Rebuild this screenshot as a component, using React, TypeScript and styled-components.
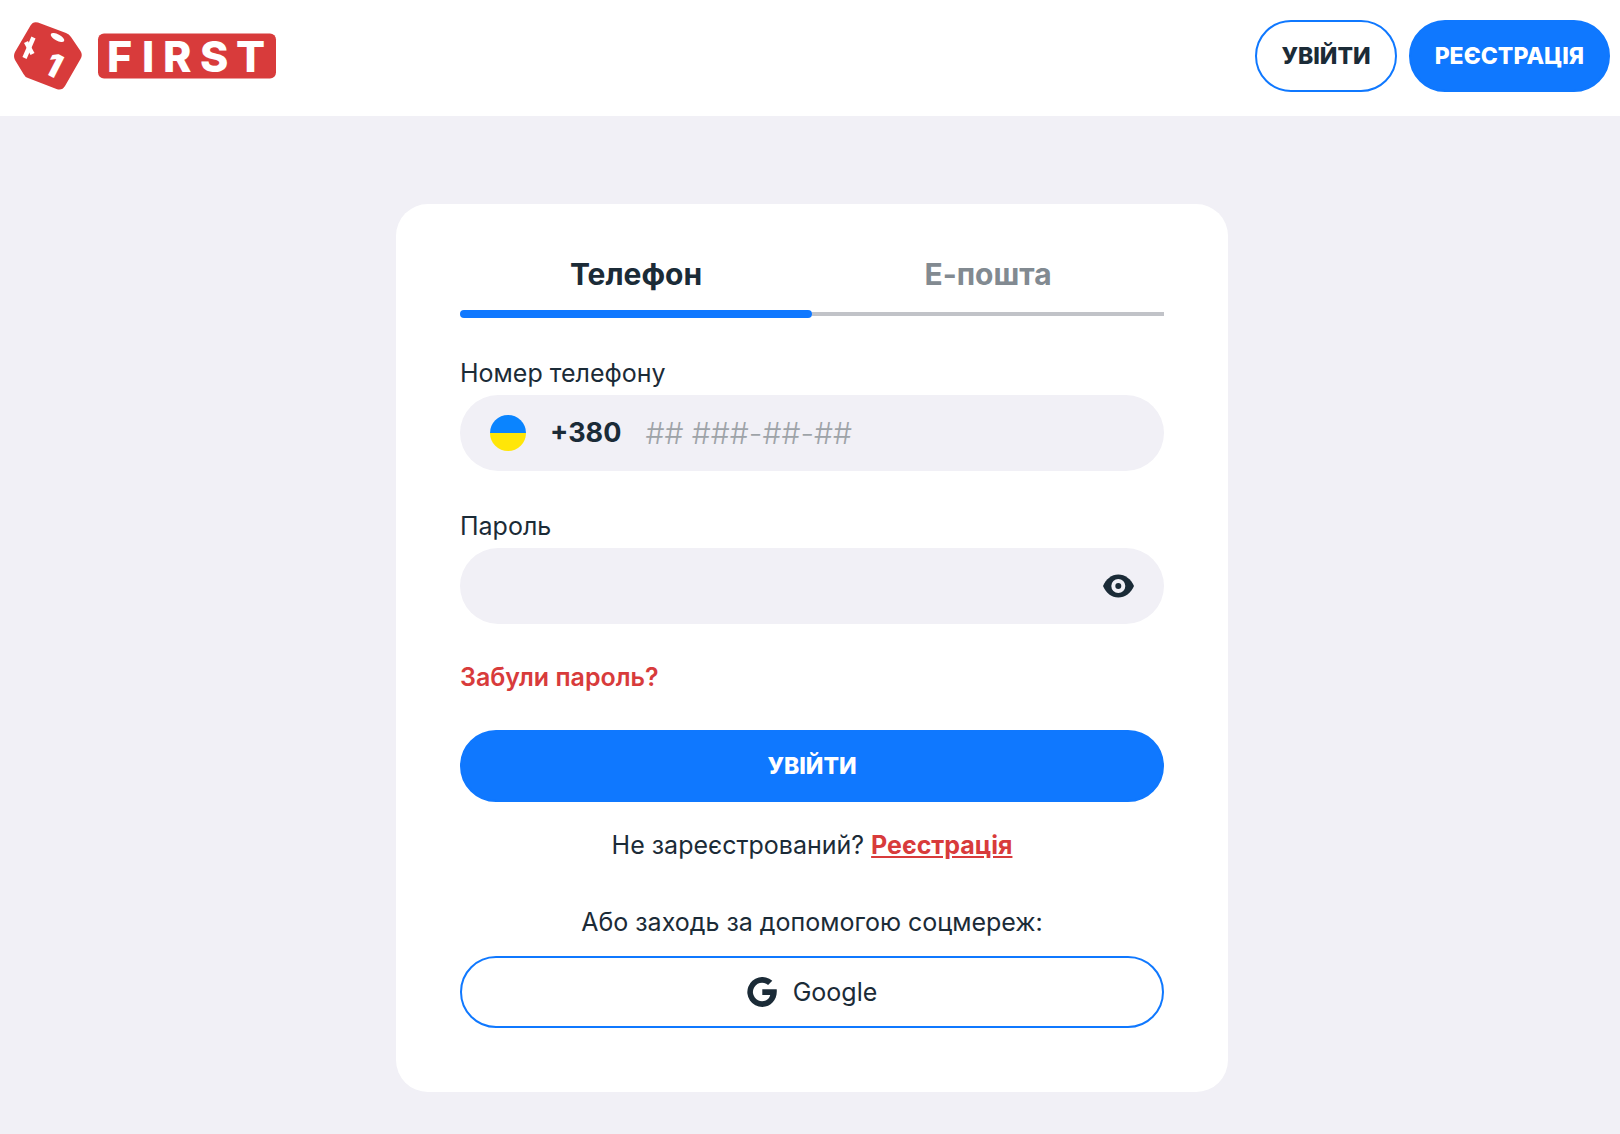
import React, { useState } from "react";
import styled, { createGlobalStyle, css } from "styled-components";

const color = {
  ink: "#1b2b37",
  blue: "#0f78ff",
  red: "#d83b3b",
  page: "#f1f0f6",
  muted: "#828a91",
  line: "#c1c3c8",
  placeholder: "#9ea3a8",
};

const GlobalStyle = createGlobalStyle`
  *, *::before, *::after { box-sizing: border-box; }
  body {
    margin: 0;
    background: ${color.page};
    color: ${color.ink};
    font-family: Inter, "Open Sans", sans-serif;
    font-size: 25px;
    line-height: 32px;
  }
  button, input { font: inherit; color: inherit; }
`;

const Header = styled.header`
  display: flex;
  align-items: center;
  justify-content: space-between;
  padding: 20px 10px 24px 14px;
  background: #fff;
`;

const LogoLink = styled.a`
  display: flex;
  align-items: center;
  gap: 16px;
`;

const Wordmark = styled.svg`
  overflow: visible;
`;

const HeaderActions = styled.nav`
  display: flex;
  gap: 12px;
`;

const Button = styled.button<{ $outlined?: boolean }>`
  display: flex;
  align-items: center;
  justify-content: center;
  gap: 16px;
  height: 72px;
  padding: 0 24px;
  border: 2px solid ${color.blue};
  border-radius: 36px;
  background: ${color.blue};
  color: #fff;
  font-size: 23px;
  font-weight: 800;
  cursor: pointer;
  ${(p) =>
    p.$outlined &&
    css`
      background: #fff;
      color: ${color.ink};
    `}
`;

const GoogleButton = styled(Button)`
  font-size: 25px;
  font-weight: 400;
`;

const Main = styled.main`
  display: flex;
  justify-content: center;
  padding: 88px 10px 42px 14px;
`;

const Card = styled.section`
  width: 100%;
  max-width: 832px;
  padding: 44px 64px 64px;
  border-radius: 32px;
  background: #fff;
`;

const Tabs = styled.div`
  display: grid;
  grid-template-columns: 1fr 1fr;
`;

const Tab = styled.button<{ $active: boolean }>`
  display: flex;
  flex-direction: column;
  padding: 0;
  border: 0;
  background: none;
  color: ${(p) => (p.$active ? color.ink : color.muted)};
  font-size: 30px;
  font-weight: 700;
  line-height: 52px;
  cursor: pointer;

  &::after {
    content: "";
    width: 100%;
    height: ${(p) => (p.$active ? 8 : 4)}px;
    margin: ${(p) => (p.$active ? 10 : 12)}px 0 0;
    border-radius: ${(p) => (p.$active ? 4 : 0)}px;
    background: ${(p) => (p.$active ? color.blue : color.line)};
  }
`;

const TabLabel = styled.span`
  width: 100%;
  text-align: center;
`;

const Form = styled.form`
  display: flex;
  flex-direction: column;
  gap: 37px;
  padding-top: 37px;
`;

const Field = styled.div`
  display: flex;
  flex-direction: column;
  gap: 4px;
`;

const Label = styled.label`
  line-height: 36px;
`;

const InputShell = styled.div`
  display: flex;
  align-items: center;
  gap: 24px;
  height: 76px;
  padding: 0 30px;
  border-radius: 38px;
  background: ${color.page};
`;

const Flag = styled.span`
  width: 36px;
  height: 36px;
  border-radius: 50%;
  background: linear-gradient(#0a84ff 50%, #ffe608 50%);
`;

const DialCode = styled.span`
  font-size: 27px;
  font-weight: 700;
`;

const TextInput = styled.input`
  flex: 1;
  min-width: 0;
  padding: 0;
  border: 0;
  outline: 0;
  background: none;
  font-size: 30px;
  font-weight: 300;

  &::placeholder {
    color: ${color.placeholder};
    opacity: 1;
  }
`;

const IconButton = styled.button`
  display: flex;
  padding: 0;
  border: 0;
  background: none;
  cursor: pointer;
`;

const ForgotLink = styled.a`
  align-self: flex-start;
  color: ${color.red};
  font-weight: 600;
  text-decoration: none;
`;

const Note = styled.p`
  margin: 27px 0 0;
  text-align: center;
`;

const SignUpLink = styled.a`
  color: ${color.red};
  font-weight: 700;
`;

const Social = styled.div`
  display: flex;
  flex-direction: column;
  gap: 18px;
  padding-top: 45px;
  text-align: center;
`;

function Logo() {
  return (
    <LogoLink href="#" aria-label="First">
      <svg width="68" height="68" viewBox="14 22 68 68" aria-hidden="true">
        <path
          d="M30.500 25.500Q33 21 38 22.500L66 33Q69 34 71 37L80.500 51Q83 55 80.500 59L65 86Q62 91 56.500 89L28 78Q25 77 23.500 74L15 60Q13 56 15 52Z"
          fill={color.red}
        />
        <ellipse cx="57.500" cy="37.500" rx="7.500" ry="3.200" transform="rotate(28 57.500 37.500)" fill="#fff" />
        <path d="M33.500 37.500L24.500 58" stroke="#fff" strokeWidth="4.500" />
        <path d="M26 42L32.500 54" stroke="#fff" strokeWidth="4.500" />
        <text x="-11" y="0" transform="translate(52 77) rotate(27)" fill="#fff" fontSize="32" fontWeight="900">
          1
        </text>
      </svg>
      <Wordmark width="178" height="46" viewBox="0 0 178 46" role="img" aria-label="FIRST">
        <rect y="0.500" width="178" height="45" rx="6" fill={color.red} />
        <text x="9 44 65 102 138" y="38.500" fill="#fff" fontSize="43" fontWeight="800">
          FIRST
        </text>
      </Wordmark>
    </LogoLink>
  );
}

function EyeIcon() {
  return (
    <svg width="31" height="36" viewBox="0 0 31 36" aria-hidden="true">
      <path d="M0 18C3 11 8.500 6.500 15.300 6.500S28 11 31 18c-3 7-9 11.500-15.700 11.500S3 25 0 18Z" fill={color.ink} />
      <circle cx="15.300" cy="18" r="5" fill="none" stroke={color.page} strokeWidth="4" />
    </svg>
  );
}

function GoogleIcon() {
  return (
    <svg width="30" height="30" viewBox="0 0 30 30" aria-hidden="true">
      <path
        d="M15.300 12.300H29.700C30.700 22 24.500 30 15.300 30A15 15 0 1 1 25.300 3.800L21.100 8A9.200 9.200 0 1 0 15.300 24.200C19.300 24.200 22.100 22.200 23.200 18.100H15.300Z"
        fill={color.ink}
      />
    </svg>
  );
}

export default function App() {
  const [tab, setTab] = useState<"phone" | "email">("phone");
  const [shown, setShown] = useState(false);

  return (
    <>
      <GlobalStyle />
      <Header>
        <Logo />
        <HeaderActions>
          <Button type="button" $outlined>
            УВІЙТИ
          </Button>
          <Button type="button">РЕЄСТРАЦІЯ</Button>
        </HeaderActions>
      </Header>
      <Main>
        <Card>
          <Tabs role="tablist">
            <Tab type="button" role="tab" aria-selected={tab === "phone"} $active={tab === "phone"} onClick={() => setTab("phone")}>
              <TabLabel>Телефон</TabLabel>
            </Tab>
            <Tab type="button" role="tab" aria-selected={tab === "email"} $active={tab === "email"} onClick={() => setTab("email")}>
              <TabLabel>Е-пошта</TabLabel>
            </Tab>
          </Tabs>
          <Form onSubmit={(e) => e.preventDefault()}>
            <Field>
              <Label htmlFor="phone">Номер телефону</Label>
              <InputShell>
                <Flag />
                <DialCode>+380</DialCode>
                <TextInput id="phone" type="tel" placeholder="## ###-##-##" />
              </InputShell>
            </Field>
            <Field>
              <Label htmlFor="password">Пароль</Label>
              <InputShell>
                <TextInput id="password" type={shown ? "text" : "password"} />
                <IconButton type="button" aria-label="Показати пароль" onClick={() => setShown(!shown)}>
                  <EyeIcon />
                </IconButton>
              </InputShell>
            </Field>
            <ForgotLink href="#">Забули пароль?</ForgotLink>
            <Button type="submit">УВІЙТИ</Button>
          </Form>
          <Note>
            Не зареєстрований? <SignUpLink href="#">Реєстрація</SignUpLink>
          </Note>
          <Social>
            <span>Або заходь за допомогою соцмереж:</span>
            <GoogleButton type="button" $outlined>
              <GoogleIcon />
              Google
            </GoogleButton>
          </Social>
        </Card>
      </Main>
    </>
  );
}
